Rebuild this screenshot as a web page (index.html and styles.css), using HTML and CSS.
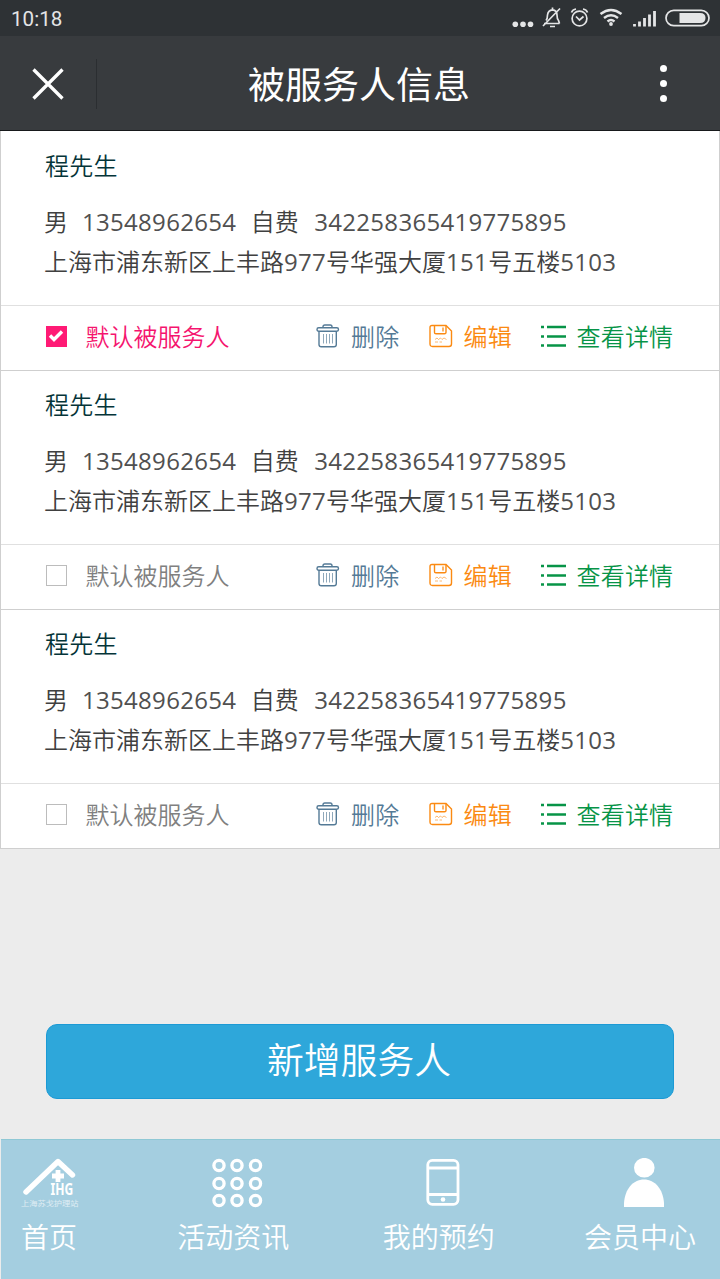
FILE: index.html
```
<!DOCTYPE html>
<html lang="zh-CN">
<head>
<meta charset="UTF-8">
<title>被服务人信息</title>
<link rel="stylesheet" href="styles.css">
</head>
<body>
<svg class="symbols" width="0" height="0">
  <symbol id="trash" viewBox="0 0 24 24"><g fill="none" stroke="currentColor" stroke-width="1.4"><path d="M7 4V2.800Q7 1 8.800 1h5.400Q16 1 16 2.800V4"/><rect x="1" y="3.800" width="21.500" height="3.400" rx="1.700"/><path d="M3 7.500V20.500Q3 22.800 5.300 22.800H18Q20.300 22.800 20.300 20.500V7.500"/></g><path d="M7.500 10v9.500M10.500 10v9.500M13.500 10v9.500M16.500 10v9.500" stroke="currentColor" opacity=".65"/></symbol>
  <symbol id="save" viewBox="0 0 24 24"><g fill="none" stroke="currentColor" stroke-width="1.400"><path d="M3 1.500H17L22.500 7V20Q22.500 22.500 20 22.500H3.500Q1 22.500 1 20V3.500Q1 1.500 3 1.500Z"/><path d="M5.500 2v6.500Q5.500 9.800 7 9.800h8.500Q17 9.800 17 8.500V2"/><path d="M14 3.500v4" stroke-width="1.300"/></g><path d="M6 15.500l2-1.500 1.500 1.500 2-1.500 1.500 1.500 2-1.500 2.500 1.500M6 18h3M10.500 18h2.500" fill="none" stroke="currentColor" opacity=".6"/></symbol>
  <symbol id="lines" viewBox="0 0 25 22"><path d="M0 2h3M0 11.500h3M0 20.500h3M6 2h19M6 11.500h19M6 20.500h19" stroke="currentColor" stroke-width="2.600"/></symbol>
</svg>
<div class="statusbar">
  <span class="time">10:18</span>
  <svg class="status-icons" width="200" height="30" viewBox="0 0 200 30" fill="none" stroke="#e4e5e6" stroke-width="1.700">
    <g fill="#e4e5e6" stroke="none"><circle cx="5.300" cy="24.300" r="2.800"/><circle cx="13" cy="24.300" r="2.800"/><circle cx="20.500" cy="24.300" r="2.800"/></g>
    <path d="M34 23.500H49.500M36 20.500Q37.500 19 37.500 15Q38 10.300 42.500 9.800Q47 10.300 47 15Q47 19 48.500 20.500L49.500 23.500M33 26L50 8.500M40 26.500h5M42.500 7.500v2"/>
    <circle cx="69.500" cy="18.500" r="7.400"/><path d="M66 16.500l3.500 3.500 4-3.500M61.500 12.500Q62.500 9.500 66 9M77.500 12.500Q76.500 9.500 73 9"/>
    <g stroke-width="2.400"><path d="M90.500 14Q101 6 111.500 14M94 18Q101 12.500 108 18M97.500 21.500Q101 18.500 104.500 21.500"/></g><circle cx="101" cy="24" r="1.900" fill="#e4e5e6" stroke="none"/>
    <path d="M124.500 24v2.500M129.500 21.500v5M134.500 18V26.500M139.500 14.500V26.500M144.500 11V26.500" stroke-width="2.800"/>
    <rect x="156" y="10.300" width="43" height="15.400" rx="7.700"/><path d="M169.500 13H190Q195.500 13 195.500 18T190 23H169.500Z" fill="#e4e5e6" stroke="none"/>
  </svg>
</div>
<header class="header">
  <div class="close"><svg width="32" height="32" viewBox="0 0 32 32"><path d="M1.500 1.500L30.500 30.500M30.500 1.500L1.500 30.500" stroke="#fff" stroke-width="3.300"/></svg></div>
  <h1 class="title">被服务人信息</h1>
  <div class="more"><i></i><i></i><i></i></div>
</header>
<main class="list">
  <section class="card">
    <div class="info">
      <h2 class="name">程先生</h2>
      <p class="line"><span>男</span><span class="num phone">13548962654</span><span>自费</span><span class="num idno">342258365419775895</span></p>
      <p class="line">上海市浦东新区上丰路<span class="num">977</span>号华强大厦<span class="num">151</span>号五楼<span class="num">5103</span></p>
    </div>
    <div class="actions">
      <div class="default checked"><span class="box"><svg width="21" height="21" viewBox="0 0 21 21"><path d="M4 9.500l4 4 8-8" fill="none" stroke="#fff" stroke-width="3.400"/></svg></span>默认被服务人</div>
      <div class="action delete"><svg width="24" height="24"><use href="#trash"/></svg>删除</div>
      <div class="action edit"><svg width="24" height="24"><use href="#save"/></svg>编辑</div>
      <div class="action detail"><svg width="25" height="22"><use href="#lines"/></svg>查看详情</div>
    </div>
  </section>
  <section class="card">
    <div class="info">
      <h2 class="name">程先生</h2>
      <p class="line"><span>男</span><span class="num phone">13548962654</span><span>自费</span><span class="num idno">342258365419775895</span></p>
      <p class="line">上海市浦东新区上丰路<span class="num">977</span>号华强大厦<span class="num">151</span>号五楼<span class="num">5103</span></p>
    </div>
    <div class="actions">
      <div class="default"><span class="box"></span>默认被服务人</div>
      <div class="action delete"><svg width="24" height="24"><use href="#trash"/></svg>删除</div>
      <div class="action edit"><svg width="24" height="24"><use href="#save"/></svg>编辑</div>
      <div class="action detail"><svg width="25" height="22"><use href="#lines"/></svg>查看详情</div>
    </div>
  </section>
  <section class="card">
    <div class="info">
      <h2 class="name">程先生</h2>
      <p class="line"><span>男</span><span class="num phone">13548962654</span><span>自费</span><span class="num idno">342258365419775895</span></p>
      <p class="line">上海市浦东新区上丰路<span class="num">977</span>号华强大厦<span class="num">151</span>号五楼<span class="num">5103</span></p>
    </div>
    <div class="actions">
      <div class="default"><span class="box"></span>默认被服务人</div>
      <div class="action delete"><svg width="24" height="24"><use href="#trash"/></svg>删除</div>
      <div class="action edit"><svg width="24" height="24"><use href="#save"/></svg>编辑</div>
      <div class="action detail"><svg width="25" height="22"><use href="#lines"/></svg>查看详情</div>
    </div>
  </section>
</main>
<button class="add">新增服务人</button>
<nav class="tabs">
  <a class="tab home">
    <svg width="58" height="50" viewBox="0 0 58 50"><path d="M5 34L37 3.500L51.500 17" fill="none" stroke="#fff" stroke-width="5.400" stroke-linecap="round" stroke-linejoin="round"/><path d="M37 12v12M31 18h12" stroke="#fff" stroke-width="4.800"/><text class="logo" transform="translate(29.500 37) scale(.78 1)">IHG</text><text class="logo-sub" x="0" y="47.500" textLength="57.500" lengthAdjust="spacingAndGlyphs">上海苏戈护理站</text></svg>
    <span>首页</span>
  </a>
  <a class="tab news">
    <svg width="51" height="50" viewBox="0 0 51 50" fill="none" stroke="#fff" stroke-width="3.300"><circle cx="7" cy="7.500" r="5.100"/><circle cx="25" cy="7.500" r="5.100"/><circle cx="43.500" cy="7.500" r="5.100"/><circle cx="7" cy="25.500" r="5.100"/><circle cx="25" cy="25.500" r="5.100"/><circle cx="43.500" cy="25.500" r="5.100"/><circle cx="7" cy="42.500" r="5.100"/><circle cx="25" cy="42.500" r="5.100"/><circle cx="43.500" cy="42.500" r="5.100"/></svg>
    <span>活动资讯</span>
  </a>
  <a class="tab booking">
    <svg width="34" height="50" viewBox="0 0 34 50" fill="none" stroke="#fff" stroke-width="2.800"><rect x="1.800" y="2.300" width="30.200" height="44" rx="4.500"/><path d="M2 10h30M2 36.500h30"/><circle cx="17" cy="41.500" r="2.300" fill="#fff" stroke="none"/></svg>
    <span>我的预约</span>
  </a>
  <a class="tab member">
    <svg width="40" height="50" viewBox="0 0 40 50" fill="#fff"><ellipse cx="20.300" cy="9.700" rx="10.300" ry="9.800"/><path d="M0 49V45C1 31 9 21.500 20 21.500S39 31 40 45V49Z"/></svg>
    <span>会员中心</span>
  </a>
</nav>
</body>
</html>
```
FILE: styles.css
```
* { box-sizing: border-box; }
body {
  margin: 0;
  width: 720px;
  height: 1279px;
  overflow: hidden;
  display: flex;
  flex-direction: column;
  background: #ececec;
  font-family: "Open Sans", "Noto Sans CJK SC", sans-serif;
  font-size: 24px;
  font-weight: 350;
}
h1, h2, p { margin: 0; font-weight: inherit; font-size: inherit; }
svg { flex: none; display: block; }
.symbols { position: absolute; }
.statusbar {
  height: 36px;
  flex: none;
  display: flex;
  justify-content: space-between;
  padding: 0 10px 0 11px;
  background: #2e3235;
}
.time { font: 400 20.600px/38px Roboto, sans-serif; color: #e4e5e6; }
.header {
  height: 95px;
  flex: none;
  display: grid;
  grid-template-columns: 97px 1fr 112px;
  align-items: center;
  padding-top: 1px;
  background: #383b3e;
  border-bottom: 1px solid #17191b;
}
.close {
  height: 50px;
  display: flex;
  align-items: center;
  padding-left: 32px;
  border-right: 1px solid #2b2e31;
}
.title {
  padding: 2px 0 0 13px;
  text-align: center;
  font-size: 37px;
  line-height: 50px;
  font-weight: 400;
  color: #fff;
}
.more { display: flex; flex-direction: column; gap: 8px; padding-left: 52px; }
.more i { width: 7px; height: 7px; border-radius: 50%; background: #fff; }
.list {
  flex: none;
  padding-top: 1px;
  background: #fff;
  border: solid #cfcfcf;
  border-width: 0 1px;
}
.card { height: 239px; border-bottom: 1px solid #cfcfcf; }
.info { height: 174px; padding: 14px 43px 0; border-bottom: 1px solid #e0e0e0; color: #404040; }
.name { padding-left: 1px; margin-bottom: 16px; line-height: 40px; letter-spacing: .2px; color: #043438; }
.line { height: 40px; line-height: 40px; white-space: nowrap; }
.num { letter-spacing: .3px; font-weight: 400; color: #505050; }
.phone { margin: 0 14.500px 0 14px; }
.idno { margin-left: 15.500px; }
.actions { height: 64px; display: flex; align-items: center; padding: 0 0 3px 45px; line-height: 40px; white-space: nowrap; }
.default { display: flex; align-items: center; gap: 18.500px; width: 270px; color: #808080; }
.box { width: 21px; height: 21px; border: 1px solid #bcbcbc; }
.checked { color: #f5146e; }
.checked .box { background: #ff1a75; border: 0; }
.action { display: flex; align-items: center; gap: 11px; letter-spacing: .2px; }
.action svg { margin-bottom: 2px; }
.delete { width: 112.500px; color: #547a96; }
.edit { width: 112px; color: #fb8a12; }
.detail { color: #079447; }
.detail svg { margin-bottom: 1px; }
.add {
  flex: none;
  height: 75px;
  margin: 175px 46px 40px;
  padding: 0 2px 4px 0;
  border: 1px solid #1c9ad5;
  border-radius: 11px;
  background: #2ea7da;
  color: #fff;
  font: 350 36.800px/60px "Open Sans", "Noto Sans CJK SC", sans-serif;
}
.tabs {
  height: 140px;
  flex: none;
  margin-left: 1px;
  display: flex;
  justify-content: space-between;
  padding: 18px 24px 0 20px;
  border-top: 1px solid #8fc8d5;
  background: #a4cee0;
}
.tab { display: flex; flex-direction: column; align-items: center; color: #fff; font-size: 28px; line-height: 40px; }
.tab span { margin-top: 9px; }
.home { align-items: flex-start; width: 58px; }
.news { margin-left: 9px; }
.booking { margin-left: 4px; }
.news svg, .booking svg, .member svg { margin-left: 9px; }
.logo { font: 700 15.500px "Noto Sans", sans-serif; fill: #fff; }
.logo-sub { font: 400 7px "Noto Sans CJK SC", sans-serif; fill: #fff; opacity: .65; }
```
